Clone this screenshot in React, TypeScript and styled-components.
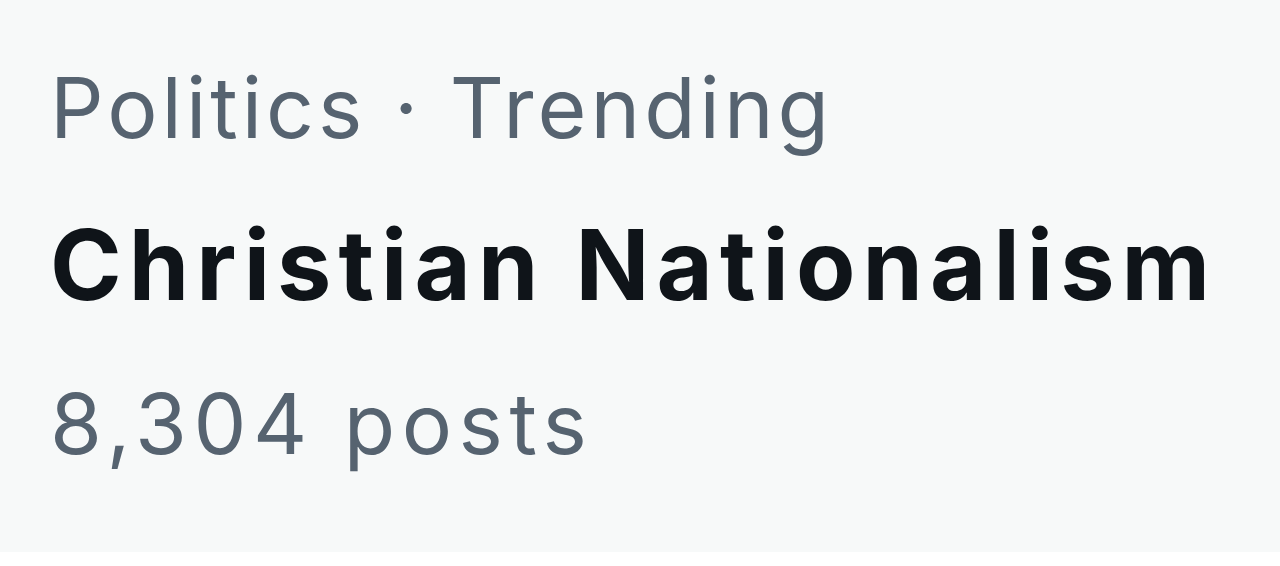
import styled, { createGlobalStyle } from "styled-components";

const GlobalStyle = createGlobalStyle`
    html, body {
        margin: 0;
        padding: 0;
        background: #ffffff;
    }
`;

const TrendCard = styled.div`
    width: 1280px;
    height: 552px;
    box-sizing: border-box;
    background-color: #f7f9f9;
    padding: 57px 50px 0;
    display: flex;
    flex-direction: column;
    align-items: flex-start;
    font-family: Inter, "Liberation Sans", sans-serif;
`;

const Meta = styled.span<{ $top?: number; $spacing?: number }>`
    color: #566370;
    font-size: 84px;
    line-height: 102px;
    font-weight: 400;
    letter-spacing: ${(p) => p.$spacing ?? 0}px;
    margin-top: ${(p) => p.$top ?? 0}px;
    white-space: nowrap;
`;

const TrendTitle = styled.span`
    color: #0f1419;
    font-size: 97px;
    line-height: 128px;
    font-weight: 650;
    letter-spacing: 7.1px;
    margin-top: 42px;
    white-space: nowrap;
`;

const App = () => {
    return (
        <>
            <GlobalStyle />
            <TrendCard>
                <Meta $spacing={4}>Politics · Trending</Meta>
                <TrendTitle>Christian Nationalism</TrendTitle>
                <Meta $top={44} $spacing={6.5}>
                    8,304 posts
                </Meta>
            </TrendCard>
        </>
    );
};

export default App;
